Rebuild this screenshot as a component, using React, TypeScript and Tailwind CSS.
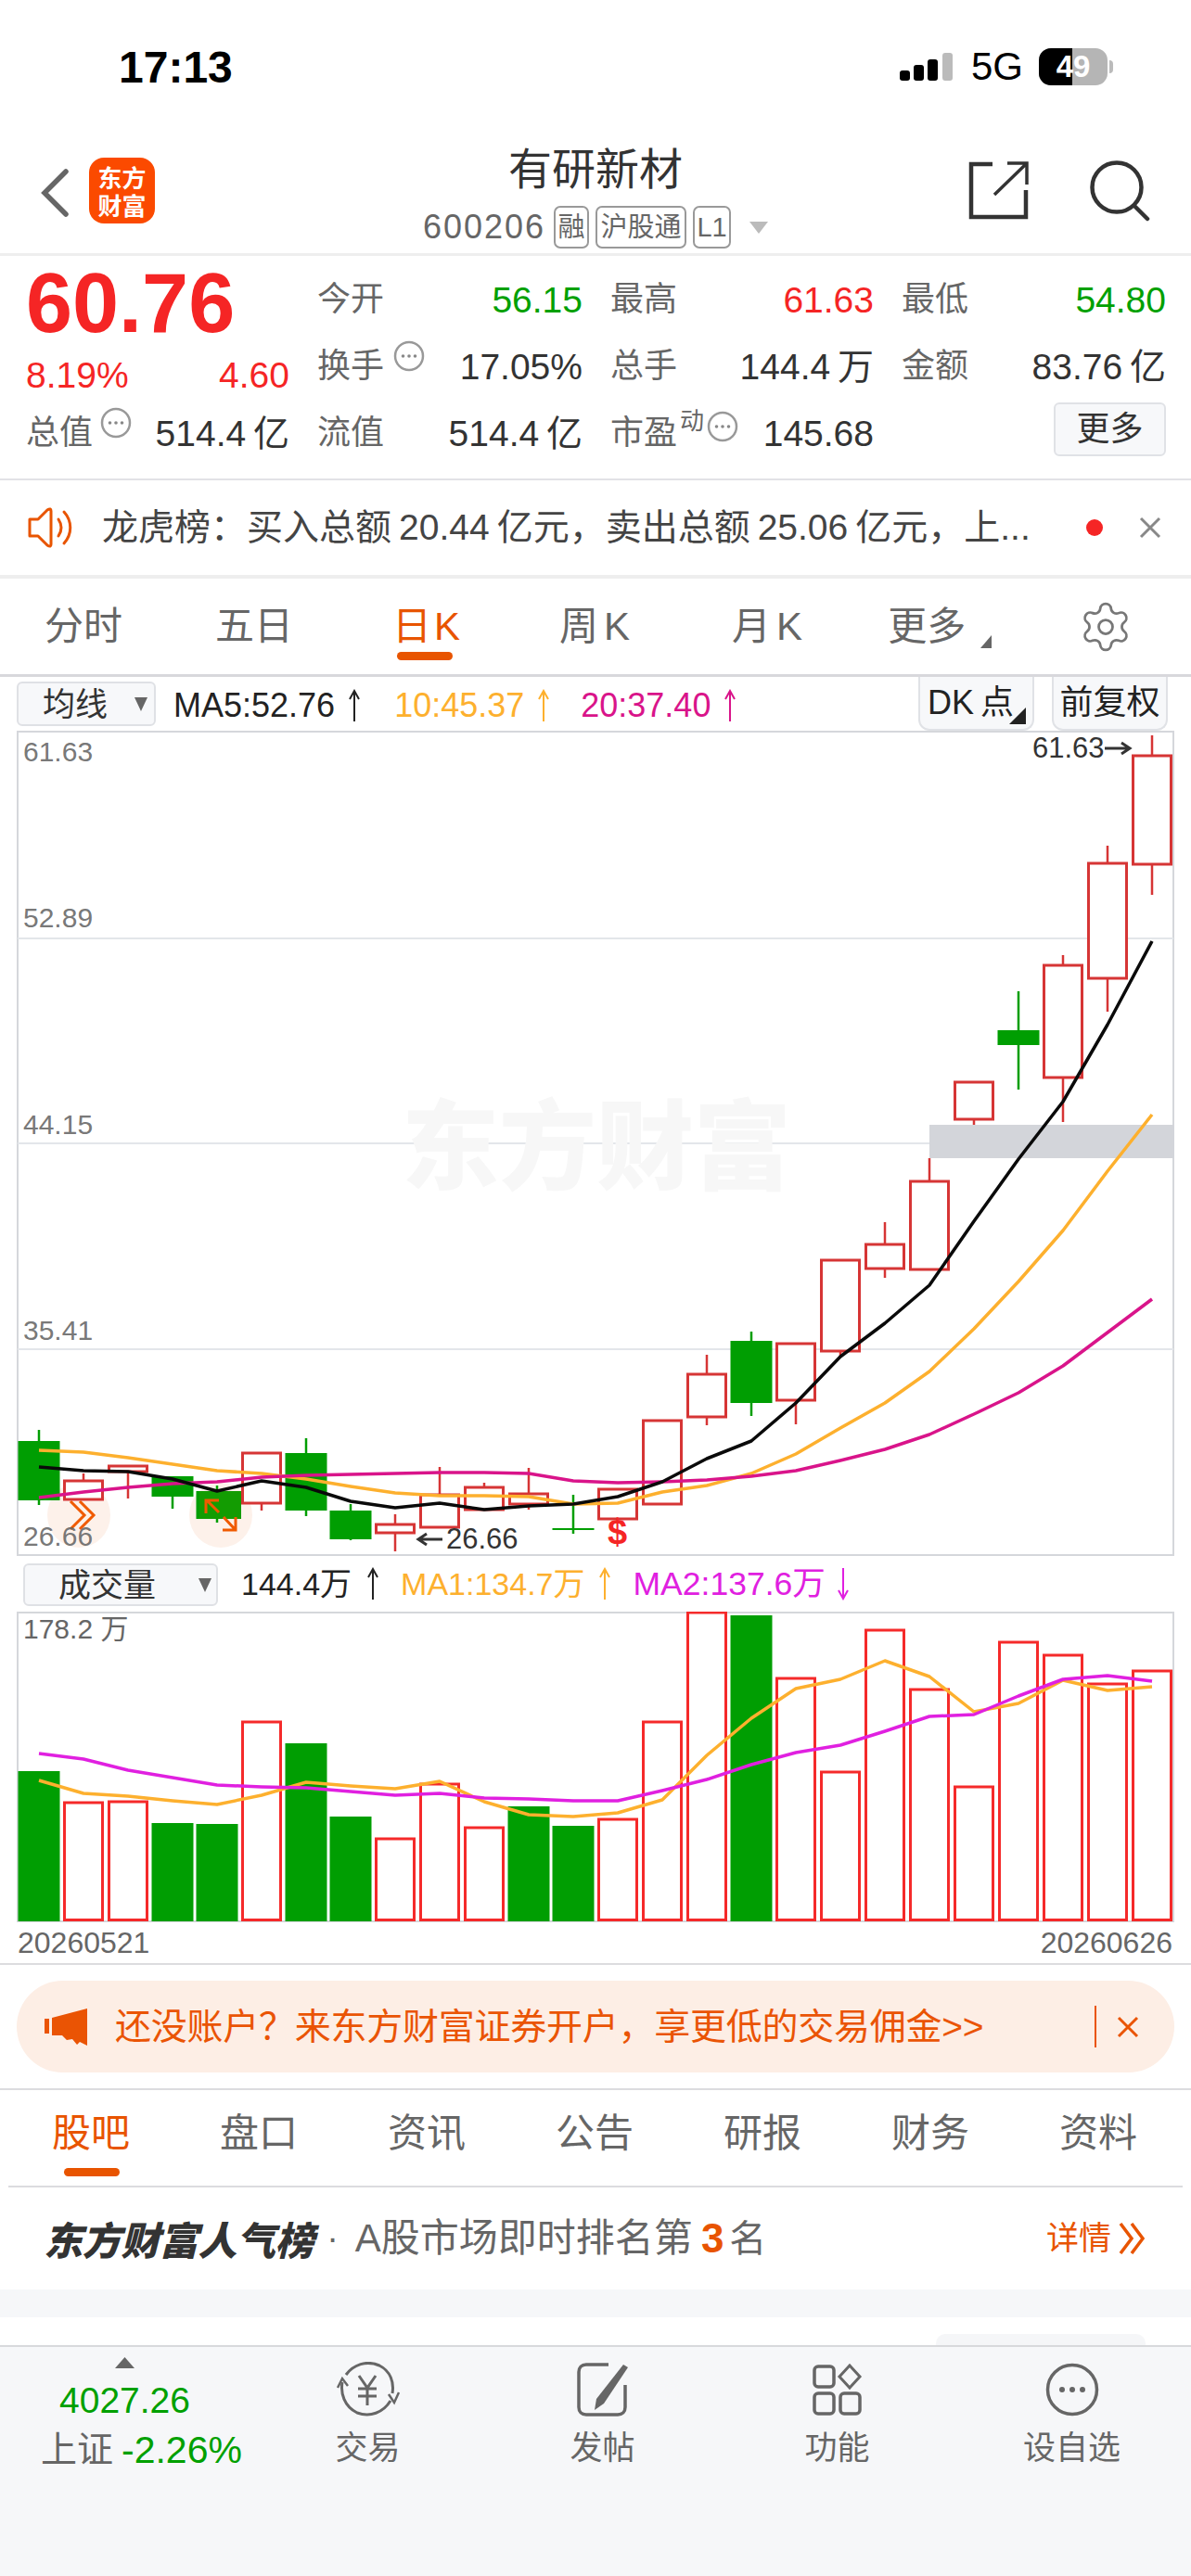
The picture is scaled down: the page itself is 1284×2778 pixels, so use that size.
import React from "react";
import { Settings } from "lucide-react";

type C = [number, number, number, number, number, number];
// green?1:0, wickTop, bodyTop, bodyBottom, wickBottom
const candles: C[] = [
  [1, 1542, 1554, 1618, 1623, 0],
  [0, 1589, 1597, 1617, 1617, 0],
  [0, 1581, 1581, 1587, 1616, 0],
  [1, 1592, 1592, 1614, 1627, 0],
  [1, 1602, 1608, 1638, 1642, 0],
  [0, 1567, 1567, 1621, 1629, 0],
  [1, 1551, 1567, 1629, 1635, 0],
  [1, 1622, 1629, 1660, 1661, 0],
  [0, 1633, 1644, 1653, 1673, 0],
  [0, 1582, 1612, 1647, 1647, 0],
  [0, 1599, 1604, 1628, 1628, 0],
  [0, 1583, 1611, 1622, 1628, 0],
  [1, 1612, 1648, 1650, 1654, 0],
  [0, 1606, 1606, 1638, 1638, 0],
  [0, 1532, 1532, 1622, 1622, 0],
  [0, 1461, 1482, 1528, 1537, 0],
  [1, 1436, 1446, 1513, 1527, 0],
  [0, 1449, 1449, 1510, 1536, 0],
  [0, 1359, 1359, 1457, 1463, 0],
  [0, 1318, 1342, 1368, 1378, 0],
  [0, 1249, 1274, 1369, 1369, 0],
  [0, 1167, 1167, 1207, 1213, 0],
  [1, 1069, 1111, 1127, 1175, 0],
  [0, 1030, 1041, 1162, 1210, 0],
  [0, 912, 931, 1055, 1091, 0],
  [0, 793, 815, 932, 965, 0],
];
const cx = (i: number) => 42 + 48 * i;
const poly = (a: number[]) => a.map((y, i) => `${cx(i)},${y}`).join(" ");
const ma5 = [1582, 1586, 1587, 1595, 1608, 1597, 1604, 1619, 1626, 1621, 1628, 1624, 1622, 1614, 1598, 1573, 1554, 1513, 1463, 1427, 1386, 1317, 1250, 1188, 1105, 1015];
const ma10 = [1564, 1566, 1572, 1579, 1586, 1589, 1595, 1603, 1610, 1613, 1613, 1614, 1622, 1621, 1609, 1602, 1589, 1568, 1540, 1513, 1479, 1433, 1382, 1327, 1263, 1202];
const ma20 = [1615, 1609, 1604, 1600, 1598, 1593, 1591, 1590, 1589, 1588, 1588, 1589, 1597, 1599, 1598, 1596, 1592, 1586, 1575, 1563, 1547, 1525, 1502, 1473, 1437, 1401];
const volGreen = [1, 0, 0, 1, 1, 0, 1, 1, 0, 0, 0, 1, 1, 0, 0, 0, 1, 0, 0, 0, 0, 0, 0, 0, 0, 0];
const vol = [1910, 1944, 1943, 1966, 1967, 1857, 1880, 1959, 1983, 1924, 1971, 1948, 1969, 1962, 1857, 1739, 1742, 1810, 1911, 1758, 1822, 1927, 1771, 1785, 1816, 1802];
const ma1 = [1920, 1934, 1937, 1942, 1946, 1936, 1922, 1926, 1929, 1921, 1943, 1957, 1959, 1955, 1941, 1893, 1853, 1821, 1811, 1791, 1808, 1846, 1837, 1812, 1823, 1819];
const ma2 = [1891, 1897, 1909, 1917, 1925, 1927, 1928, 1932, 1936, 1934, 1939, 1940, 1942, 1942, 1931, 1919, 1903, 1890, 1882, 1867, 1851, 1849, 1829, 1811, 1807, 1813];

const GREEN = "#009e02";
const CRED = "#d63535";
const VRED = "#f52a2a";

function Dots() {
  return (
    <svg width="34" height="34" viewBox="0 0 34 34" className="shrink-0">
      <circle cx="17" cy="17" r="15" fill="none" stroke="#999" strokeWidth="2.5" />
      <circle cx="10.5" cy="17" r="1.8" fill="#888" />
      <circle cx="17" cy="17" r="1.8" fill="#888" />
      <circle cx="23.5" cy="17" r="1.8" fill="#888" />
    </svg>
  );
}

function VArrow({ color, down = false }: { color: string; down?: boolean }) {
  return (
    <svg width="16" height="36" viewBox="0 0 16 36" className="shrink-0">
      {down ? (
        <path d="M8 1V34M3 25L8 34L13 25" fill="none" stroke={color} strokeWidth="2" />
      ) : (
        <path d="M8 35V2M3 11L8 2L13 11" fill="none" stroke={color} strokeWidth="2" />
      )}
    </svg>
  );
}

function Cell({ label, value, color = "text-[#333]" }: { label: string; value: string; color?: string }) {
  return (
    <div className="flex items-center justify-between">
      <span className="text-[36px] leading-none text-[#666]">{label}</span>
      <span className={`text-[39px] leading-none ${color}`}>{value}</span>
    </div>
  );
}

function PriceChart() {
  return (
    <div className="relative w-[1248px] h-[890px] mx-[18px]">
      <svg width="1248" height="890" viewBox="18 788 1248 890" className="block">
        <rect x="19" y="789" width="1246" height="888" fill="#fff" stroke="#d5d7db" strokeWidth="2" />
        {[1012, 1233, 1455].map((y) => (
          <line key={y} x1="19" x2="1265" y1={y} y2={y} stroke="#e3e6ea" strokeWidth="2" />
        ))}
        <rect x="1002" y="1213" width="264" height="36" fill="#d3d5da" />
        <ellipse cx="85" cy="1634" rx="34" ry="35" fill="#fdf1ea" />
        <ellipse cx="238" cy="1634" rx="34" ry="35" fill="#fdf1ea" />
        {candles.map((c, i) => {
          const x = cx(i);
          const col = c[0] ? GREEN : CRED;
          return (
            <g key={i}>
              <line x1={x} x2={x} y1={c[1]} y2={c[4]} stroke={col} strokeWidth="2.5" />
              {c[0] ? (
                <rect x={x - 22.5} y={c[2]} width="45" height={c[3] - c[2]} fill={col} />
              ) : (
                <rect x={x - 20.5} y={c[2]} width="41" height={c[3] - c[2]} fill="#fff" stroke={col} strokeWidth="3" />
              )}
            </g>
          );
        })}
        <rect x="215" y="1608" width="45" height="30" fill="#139c02" />
        <polyline points={poly(ma10)} fill="none" stroke="#fdb02e" strokeWidth="3.5" strokeLinejoin="round" />
        <polyline points={poly(ma20)} fill="none" stroke="#d9148a" strokeWidth="3.5" strokeLinejoin="round" />
        <polyline points={poly(ma5)} fill="none" stroke="#0a0a0a" strokeWidth="3.5" strokeLinejoin="round" />
        <path d="M76 1619L91 1634L76 1649M86 1619L101 1634L86 1649" fill="none" stroke="#f05a00" strokeWidth="3" />
        <path d="M223 1618L236 1631M222 1632V1618H236M241 1636L253 1649M254 1636V1650H240" fill="none" stroke="#f05a00" strokeWidth="3" />
        <path d="M451 1660H477M460 1654L451 1660L460 1666" fill="none" stroke="#333" strokeWidth="3" />
        <path d="M1191 807H1217M1209 801L1218 807L1209 813" fill="none" stroke="#333" strokeWidth="3" />
      </svg>
      <div className="absolute left-[415px] top-[380px] text-[105px] leading-[120px] font-black text-[#f7f7f7] font-['Noto_Sans_CJK_SC',sans-serif] whitespace-nowrap">东方财富</div>
      {[
        ["61.63", 8],
        ["52.89", 187],
        ["44.15", 410],
        ["35.41", 632],
        ["26.66", 854],
      ].map(([t, y]) => (
        <span key={t as string} className="absolute left-[7px] text-[30px] leading-[30px] text-[#666]/90" style={{ top: y as number }}>
          {t}
        </span>
      ))}
      <span className="absolute left-[1095px] top-[4px] text-[31px] leading-[30px] text-[#333]">61.63</span>
      <span className="absolute left-[463px] top-[857px] text-[31px] leading-[30px] text-[#333]">26.66</span>
      <span className="absolute left-[637px] top-[844px] text-[38px] leading-[40px] font-bold text-[#f52525]">$</span>
    </div>
  );
}

function VolChart() {
  return (
    <div className="relative w-[1248px] h-[335px] mx-[18px]">
      <svg width="1248" height="335" viewBox="18 1738 1248 335" className="block">
        <rect x="19" y="1739" width="1246" height="333" fill="#fff" stroke="#d5d7db" strokeWidth="2" />
        {vol.map((y, i) =>
          volGreen[i] ? (
            <rect key={i} x={cx(i) - 22.5} y={y} width="45" height={2072 - y} fill={GREEN} />
          ) : (
            <rect key={i} x={cx(i) - 20.5} y={y} width="41" height={2070.5 - y} fill="#fff" stroke={VRED} strokeWidth="3" />
          ),
        )}
        <polyline points={poly(ma1)} fill="none" stroke="#fdb02e" strokeWidth="3.5" strokeLinejoin="round" />
        <polyline points={poly(ma2)} fill="none" stroke="#e020e0" strokeWidth="3.5" strokeLinejoin="round" />
      </svg>
      <span className="absolute left-[7px] top-[4px] text-[30px] leading-[30px] text-[#666]">178.2 万</span>
    </div>
  );
}

function Triangle({ className = "" }: { className?: string }) {
  return (
    <svg width="14" height="15" viewBox="0 0 14 15" className={className}>
      <path d="M0 0H14L7 15Z" fill="#666" />
    </svg>
  );
}

function BottomItem({ label, children }: { label: string; children: React.ReactNode }) {
  return (
    <div className="flex flex-col items-center w-[253px]">
      <div className="h-[58px] flex items-center justify-center">{children}</div>
      <span className="mt-[14px] text-[35px] leading-[40px] text-[#666]">{label}</span>
    </div>
  );
}

export default function App() {
  return (
    <div className="w-[1284px] h-[2778px] bg-white flex flex-col overflow-hidden font-['Liberation_Sans','Noto_Sans_CJK_SC',sans-serif]">
      {/* status bar */}
      <div className="h-[140px] flex items-start justify-between pt-[50px] pl-[128px] pr-[84px] shrink-0">
        <span className="text-[48px] leading-[46px] font-bold text-black">17:13</span>
        <div className="flex items-center mt-[2px]">
          <svg width="57" height="30" viewBox="0 0 57 30">
            <rect x="0" y="19" width="11" height="11" rx="3" fill="#000" />
            <rect x="15" y="13" width="11" height="17" rx="3" fill="#000" />
            <rect x="30" y="7" width="11" height="23" rx="3" fill="#000" />
            <rect x="46" y="0" width="11" height="30" rx="3" fill="#bbb" />
          </svg>
          <span className="ml-[20px] text-[42px] leading-[40px] text-black">5G</span>
          <div className="relative ml-[17px] w-[74px] h-[40px] rounded-[13px] bg-[#b5b5b5] overflow-hidden flex items-center justify-center">
            <div className="absolute left-0 top-0 bottom-0 w-[36px] bg-black" />
            <span className="relative text-[33px] leading-[36px] font-bold text-white">49</span>
          </div>
          <div className="w-[4px] h-[14px] ml-[2px] rounded-r-full bg-[#bbb]" />
        </div>
      </div>

      {/* nav */}
      <div className="h-[133px] grid grid-cols-[1fr_auto_1fr] shrink-0">
        <div className="flex items-start pt-[30px] pl-[44px]">
          <svg width="30" height="52" viewBox="0 0 30 52" className="mt-[12px]">
            <path d="M27 3L4 26L27 49" fill="none" stroke="#666" strokeWidth="5.5" strokeLinecap="round" />
          </svg>
          <div className="ml-[22px] w-[71px] h-[71px] rounded-[16px] bg-[#fb4a00] flex items-center justify-center text-center text-white text-[26px] leading-[30px] font-bold font-['Noto_Sans_CJK_SC',sans-serif]">
            <span>东方<br />财富</span>
          </div>
        </div>
        <div className="flex flex-col items-center pt-[16px]">
          <span className="text-[47px] leading-[54px] text-[#333]">有研新材</span>
          <div className="flex items-center mt-[12px]">
            <span className="text-[36px] leading-[46px] text-[#666] tracking-[2px]">600206</span>
            <span className="ml-[9px] h-[46px] w-[38px] border-2 border-[#999] rounded-[7px] flex items-center justify-center text-[29px] leading-none text-[#666]">融</span>
            <span className="ml-[7px] h-[46px] w-[98px] border-2 border-[#999] rounded-[7px] flex items-center justify-center text-[29px] leading-none text-[#666]">沪股通</span>
            <span className="ml-[7px] h-[46px] w-[41px] border-2 border-[#999] rounded-[7px] flex items-center justify-center text-[29px] leading-none text-[#666]">L1</span>
            <svg width="20" height="13" viewBox="0 0 20 13" className="ml-[20px]">
              <path d="M0 0H20L10 13Z" fill="#bbb" />
            </svg>
          </div>
        </div>
        <div className="flex items-start justify-end pt-[33px] pr-[44px]">
          <svg width="66" height="66" viewBox="0 0 66 66">
            <path d="M26 4H3V61H62V32" fill="none" stroke="#333" strokeWidth="4.5" />
            <path d="M28 37L62 4M42 3H63V26" fill="none" stroke="#333" strokeWidth="3.5" />
          </svg>
          <svg width="66" height="66" viewBox="0 0 66 66" className="ml-[64px]">
            <circle cx="30" cy="29" r="26.5" fill="none" stroke="#333" strokeWidth="4.5" />
            <path d="M49 49L63 63" fill="none" stroke="#333" strokeWidth="4.5" strokeLinecap="round" />
          </svg>
        </div>
      </div>
      <div className="h-[3px] bg-[#eee] shrink-0" />

      {/* quote */}
      <div className="h-[240px] pl-[28px] pt-[11px] grid grid-cols-[284px_286px_284px_285px] grid-rows-[72px_72px_72px] gap-x-[30px] shrink-0">
        <div className="row-span-2 flex flex-col">
          <span className="-mt-[2px] text-[90px] leading-[84px] font-bold text-[#f52525]">60.76</span>
          <div className="flex justify-between mt-[16px] text-[39px] leading-[40px] text-[#f52525]">
            <span>8.19%</span>
            <span>4.60</span>
          </div>
        </div>
        <Cell label="今开" value="56.15" color="text-[#00a000]" />
        <Cell label="最高" value="61.63" color="text-[#f52525]" />
        <Cell label="最低" value="54.80" color="text-[#00a000]" />
        <div className="flex items-center justify-between">
          <span className="flex items-start">
            <span className="text-[36px] leading-none text-[#666]">换手</span>
            <span className="ml-[10px] -mt-[10px]"><Dots /></span>
          </span>
          <span className="text-[39px] leading-none text-[#333]">17.05%</span>
        </div>
        <Cell label="总手" value={"144.4\u2009万"} />
        <Cell label="金额" value={"83.76\u2009亿"} />
        <div className="flex items-center justify-between">
          <span className="flex items-start">
            <span className="text-[36px] leading-none text-[#666]">总值</span>
            <span className="ml-[8px] -mt-[10px]"><Dots /></span>
          </span>
          <span className="text-[39px] leading-none text-[#333]">{"514.4\u2009亿"}</span>
        </div>
        <Cell label="流值" value={"514.4\u2009亿"} />
        <div className="flex items-center justify-between">
          <span className="flex items-start">
            <span className="text-[36px] leading-none text-[#666]">市盈</span>
            <span className="ml-[3px] -mt-[8px] text-[26px] leading-none text-[#666]">动</span>
            <span className="ml-[3px] -mt-[6px]"><Dots /></span>
          </span>
          <span className="text-[39px] leading-none text-[#333]">145.68</span>
        </div>
        <div className="flex items-center justify-end">
          <span className="mb-[8px] w-[121px] h-[58px] rounded-[6px] bg-[#f7f8fa] border-2 border-[#e0e2e6] flex items-center justify-center text-[36px] leading-none text-[#333]">更多</span>
        </div>
      </div>
      <div className="h-[2px] bg-[#e2e2e6] shrink-0" />

      {/* notice */}
      <div className="h-[102px] flex items-center pl-[30px] pr-[32px] shrink-0">
        <svg width="50" height="44" viewBox="0 0 50 44">
          <path d="M2 13H11L21 3C24 1 25 2 25 4V40C25 42 24 43 21 41L11 31H2Z" fill="none" stroke="#e85400" strokeWidth="3" strokeLinejoin="round" />
          <path d="M33 13C37 19 37 25 33 31M39 5C48 15 48 29 39 39" fill="none" stroke="#e85400" strokeWidth="3" strokeLinecap="round" />
        </svg>
        <span className="ml-[30px] text-[39px] leading-[50px] text-[#444] whitespace-nowrap">
          龙虎榜：买入总额<span className="mx-[8px]">20.44</span>亿元，卖出总额<span className="mx-[8px]">25.06</span>亿元，上...
        </span>
        <span className="ml-auto w-[18px] h-[18px] rounded-full bg-[#f52525]" />
        <svg width="24" height="24" viewBox="0 0 24 24" className="ml-[39px]">
          <path d="M2 2L22 22M22 2L2 22" fill="none" stroke="#888" strokeWidth="3" />
        </svg>
      </div>
      <div className="h-[4px] bg-[#eee] shrink-0" />

      {/* period tabs */}
      <div className="h-[103px] flex items-center text-[42px] leading-[50px] text-[#666] shrink-0">
        <span className="ml-[48px]">分时</span>
        <span className="ml-[100px]">五日</span>
        <span className="relative ml-[107px] text-[#e85400]">
          日<span className="ml-[3px]">K</span>
          <span className="absolute left-[5px] w-[60px] -bottom-[11px] h-[9px] rounded-full bg-[#e85400]" />
        </span>
        <span className="ml-[107px]">周<span className="ml-[6px]">K</span></span>
        <span className="ml-[110px]">月<span className="ml-[6px]">K</span></span>
        <span className="relative ml-[92px]">
          更多
          <svg width="12" height="14" viewBox="0 0 12 14" className="absolute -right-[28px] bottom-[2px]">
            <path d="M12 0V14H0Z" fill="#666" />
          </svg>
        </span>
        <Settings className="ml-[121px]" size={60} strokeWidth={1.1} color="#777" />
      </div>
      <div className="h-[3px] bg-[#d8d8dc] shrink-0" />

      {/* MA row */}
      <div className="h-[58px] flex items-start pl-[18px] pr-[25px] text-[36px] shrink-0">
        <div className="mt-[5px] w-[150px] h-[48px] rounded-[6px] bg-[#f7f8fa] border-2 border-[#dfe1e5] flex items-center pl-[26px]">
          <span className="leading-none text-[35px] text-[#333]">均线</span>
          <Triangle className="ml-[29px]" />
        </div>
        <span className="ml-[19px] mt-[11px] leading-[40px] text-[#222]">MA5:52.76</span>
        <span className="mt-[13px] ml-[13px]"><VArrow color="#222" /></span>
        <span className="ml-[35px] mt-[11px] leading-[40px] text-[#fdb02e]">10:45.37</span>
        <span className="mt-[13px] ml-[13px]"><VArrow color="#fdb02e" /></span>
        <span className="ml-[32px] mt-[11px] leading-[40px] text-[#d9148a]">20:37.40</span>
        <span className="mt-[13px] ml-[13px]"><VArrow color="#d9148a" /></span>
        <div className="ml-auto relative w-[125px] h-[58px] rounded-b-[12px] bg-[#f7f8fa] border-2 border-t-0 border-[#e0e2e6] flex items-center pl-[8px]">
          <span className="leading-none text-[#222]">DK<span className="ml-[7px]">点</span></span>
          <svg width="18" height="18" viewBox="0 0 18 18" className="absolute right-[7px] bottom-[5px]">
            <path d="M18 0V18H0Z" fill="#222" />
          </svg>
        </div>
        <div className="ml-[19px] w-[125px] h-[58px] rounded-b-[12px] bg-[#f7f8fa] border-2 border-t-0 border-[#e0e2e6] flex items-center justify-center">
          <span className="leading-none text-[#222]">前复权</span>
        </div>
      </div>

      <PriceChart />

      {/* volume row */}
      <div className="h-[60px] flex items-start pl-[25px] text-[34px] shrink-0">
        <div className="mt-[8px] w-[210px] h-[46px] rounded-[6px] bg-[#f7f8fa] border-2 border-[#dfe1e5] flex items-center pl-[36px]">
          <span className="leading-none text-[35px] text-[#333]">成交量</span>
          <Triangle className="ml-[46px]" />
        </div>
        <span className="ml-[25px] mt-[10px] leading-[40px] text-[#222]">144.4万</span>
        <span className="mt-[12px] ml-[15px]"><VArrow color="#222" /></span>
        <span className="ml-[22px] mt-[10px] leading-[40px] text-[#fdb02e]">MA1:134.7万</span>
        <span className="mt-[12px] ml-[13px]"><VArrow color="#fdb02e" /></span>
        <span className="ml-[23px] mt-[10px] leading-[40px] text-[35.5px] text-[#e020e0]">MA2:137.6万</span>
        <span className="mt-[12px] ml-[11px]"><VArrow color="#e020e0" down /></span>
      </div>

      <VolChart />

      {/* dates */}
      <div className="h-[44px] flex items-center justify-between pl-[19px] pr-[20px] text-[32px] leading-none text-[#666] shrink-0">
        <span>20260521</span>
        <span>20260626</span>
      </div>
      <div className="h-[2px] bg-[#dcdcdf] shrink-0" />

      {/* banner */}
      <div className="h-[133px] flex items-center px-[18px] shrink-0">
        <div className="w-full h-[99px] rounded-[50px] bg-[#fdeee5] flex items-center pl-[30px]">
          <svg width="46" height="40" viewBox="0 0 46 40">
            <path d="M0 11H5V27H0ZM8 10L46 0V40L38 36L35 39L30 33L24 34L19 29H8Z" fill="#ea5404" />
          </svg>
          <span className="ml-[30px] text-[39px] leading-[50px] text-[#ea5404] whitespace-nowrap tracking-[-0.25px]">还没账户？来东方财富证券开户，享更低的交易佣金&gt;&gt;</span>
          <div className="ml-[120px] w-[2px] h-[45px] bg-[#ea5404]" />
          <svg width="24" height="24" viewBox="0 0 24 24" className="ml-[22px]">
            <path d="M2 2L22 22M22 2L2 22" fill="none" stroke="#ea5404" strokeWidth="3" />
          </svg>
        </div>
      </div>
      <div className="h-[2px] bg-[#dcdcdf] shrink-0" />

      {/* news tabs */}
      <div className="h-[103px] flex items-center justify-between pl-[56px] pr-[58px] pb-[10px] text-[42px] leading-[50px] text-[#666] shrink-0">
        <span className="relative text-[#e85400]">
          股吧
          <span className="absolute left-[13px] w-[60px] -bottom-[21px] h-[9px] rounded-full bg-[#e85400]" />
        </span>
        <span>盘口</span>
        <span>资讯</span>
        <span>公告</span>
        <span>研报</span>
        <span>财务</span>
        <span>资料</span>
      </div>
      <div className="h-[2px] mx-[9px] bg-[#dcdcdf] shrink-0" />

      {/* ranking */}
      <div className="h-[110px] flex items-center pl-[47px] pr-[48px] shrink-0">
        <span className="text-[42px] leading-[50px] font-black italic text-[#333] tracking-[-0.4px] font-['Noto_Sans_CJK_SC',sans-serif]">东方财富人气榜</span>
        <span className="ml-[14px] text-[38px] leading-[50px] text-[#666]">·</span>
        <span className="ml-[18px] text-[42px] leading-[50px] text-[#666]">A股市场即时排名第</span>
        <span className="ml-[9px] text-[44px] leading-[50px] font-bold text-[#e85400]">3</span>
        <span className="ml-[6px] text-[40px] leading-[50px] text-[#666]">名</span>
        <span className="ml-auto text-[35px] leading-[50px] text-[#e85400]">详情</span>
        <svg width="30" height="34" viewBox="0 0 30 34" className="ml-[8px]">
          <path d="M2 1L14 17L2 33M14 1L26 17L14 33" fill="none" stroke="#e85400" strokeWidth="3.5" />
        </svg>
      </div>
      <div className="h-[30px] bg-[#f6f7f9] shrink-0" />
      <div className="h-[30px] bg-white flex justify-end items-end pr-[49px] shrink-0">
        <div className="w-[226px] h-[12px] rounded-t-[10px] bg-[#f5f6f8]" />
      </div>
      <div className="h-[2px] bg-[#d8d9dc] shrink-0" />

      {/* bottom bar */}
      <div className="flex-1 bg-[#f6f7f9] flex items-start">
        <div className="w-[270px] shrink-0 flex flex-col items-start pt-[11px]">
          <svg width="21" height="12" viewBox="0 0 21 12" className="ml-[124px]">
            <path d="M10.5 0L21 12H0Z" fill="#666" />
          </svg>
          <span className="ml-[64px] mt-[15px] text-[39px] leading-[40px] text-[#00a000]">4027.26</span>
          <span className="ml-[44px] mt-[11px] flex items-center whitespace-nowrap leading-[44px]">
            <span className="text-[39px] text-[#666]">上证</span>
            <span className="ml-[9px] text-[41px] text-[#00a000]">-2.26%</span>
          </span>
        </div>
        <div className="flex pt-[17px]">
          <BottomItem label="交易">
            <svg width="68" height="60" viewBox="0 0 68 60">
              <path d="M6 22C4 34 8 48 22 55C36 60 50 55 58 42" fill="none" stroke="#666" strokeWidth="3" />
              <path d="M60 34C62 22 58 10 46 4C32 -2 18 3 10 14" fill="none" stroke="#666" strokeWidth="3" />
              <path d="M1 28L6 18L12 26M56 35L62 44L67 33" fill="none" stroke="#666" strokeWidth="2.5" />
              <path d="M24 15L33 28L42 15M33 28V47M23 29H43M23 37H43" fill="none" stroke="#666" strokeWidth="3" />
            </svg>
          </BottomItem>
          <BottomItem label="发帖">
            <svg width="56" height="58" viewBox="0 0 56 58">
              <path d="M34 2H10C5 2 2 5 2 10V48C2 53 5 56 10 56H44C49 56 52 53 52 48V24" fill="none" stroke="#666" strokeWidth="3.5" />
              <path d="M50 2L55 5L29 44L19 51L21 39Z" fill="#666" />
            </svg>
          </BottomItem>
          <BottomItem label="功能">
            <svg width="54" height="56" viewBox="0 0 54 56">
              <rect x="2" y="3" width="21" height="22" rx="4" fill="none" stroke="#666" strokeWidth="3.5" />
              <path d="M40 2L51 14L40 26L29 14Z" fill="none" stroke="#666" strokeWidth="3" />
              <rect x="2" y="32" width="21" height="22" rx="4" fill="none" stroke="#666" strokeWidth="3.5" />
              <rect x="30" y="32" width="21" height="22" rx="4" fill="none" stroke="#666" strokeWidth="3.5" />
            </svg>
          </BottomItem>
          <BottomItem label="设自选">
            <svg width="58" height="58" viewBox="0 0 58 58">
              <circle cx="29" cy="29" r="26.5" fill="none" stroke="#666" strokeWidth="3.5" />
              <circle cx="18" cy="29" r="3" fill="#666" />
              <circle cx="29" cy="29" r="3" fill="#666" />
              <circle cx="40" cy="29" r="3" fill="#666" />
            </svg>
          </BottomItem>
        </div>
      </div>
    </div>
  );
}
